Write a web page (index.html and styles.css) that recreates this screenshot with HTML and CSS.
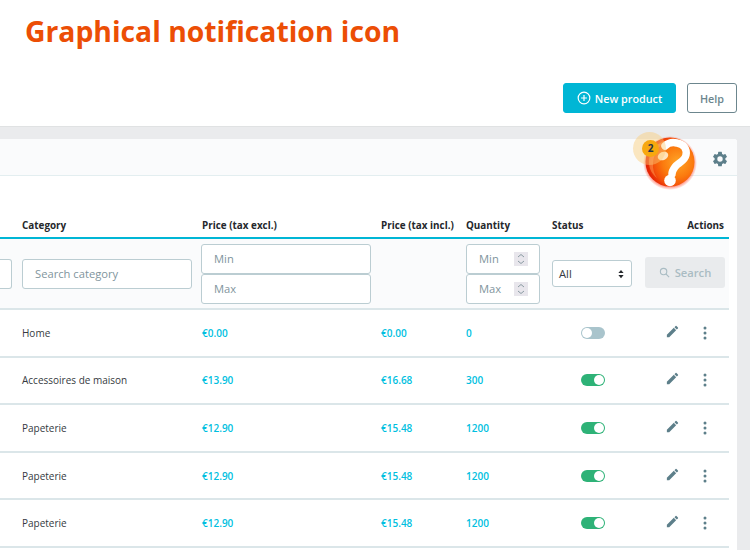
FILE: index.html
```html
<!DOCTYPE html>
<html lang="en">
<head>
<meta charset="utf-8">
<title>Graphical notification icon</title>
<link rel="stylesheet" href="styles.css">
</head>
<body>
<header class="top">
  <h1 class="title">Graphical notification icon</h1>
  <div class="top-actions">
    <button class="btn btn-primary">
      <svg class="plus" viewBox="0 0 24 24" aria-hidden="true"><circle cx="12" cy="12" r="10" fill="none" stroke="#fff" stroke-width="2"/><path d="M12 7v10M7 12h10" stroke="#fff" stroke-width="2" fill="none"/></svg>
      New product
    </button>
    <button class="btn btn-help">Help</button>
  </div>
</header>
<main class="main">
  <section class="card">
    <div class="card-head">
      <div class="notify">
        <svg class="ball" viewBox="0 0 54 54" aria-hidden="true">
          <defs>
            <radialGradient id="ballFill" cx="0.66" cy="0.5" r="0.62">
              <stop offset="0" stop-color="#ffa526"/>
              <stop offset="0.5" stop-color="#fb7a0e"/>
              <stop offset="0.8" stop-color="#f4500a"/>
              <stop offset="1" stop-color="#e42404"/>
            </radialGradient>
            <radialGradient id="ballGlow" cx="0.5" cy="0.5" r="0.5">
              <stop offset="0.85" stop-color="#ff2000" stop-opacity="0.55"/>
              <stop offset="1" stop-color="#ff2000" stop-opacity="0"/>
            </radialGradient>
          </defs>
          <circle cx="27" cy="27" r="27" fill="url(#ballGlow)"/>
          <circle cx="27" cy="26" r="24.5" fill="url(#ballFill)"/>
          <path d="M6 26C6 14 15 5 27 4 17 8 11 15 10 27c-.4 6 1 11 4 15C9 38 6 33 6 26z" fill="#ffa055" opacity="0.5"/>
          <path d="M22 10c3-3 8-4 12-3 7 1 10 6 9 12-1 6-8 8-11 12-1.500 2-3 5-3 7" fill="none" stroke="#fff" stroke-width="7.500" stroke-linecap="round"/>
          <ellipse cx="20" cy="20" rx="5.500" ry="4" transform="rotate(-25 20 20)" fill="#ffe3bd"/>
          <circle cx="27" cy="44.500" r="5.800" fill="#fff"/>
        </svg>
        <span class="halo"></span>
        <span class="badge">2</span>
      </div>
      <svg class="gear" viewBox="0 0 24 24" aria-hidden="true"><path d="M19.14 12.94c.04-.3.06-.61.06-.94s-.02-.64-.07-.94l2.03-1.58a.49.49 0 0 0 .12-.61l-1.92-3.32a.49.49 0 0 0-.59-.22l-2.39.96a7 7 0 0 0-1.62-.94l-.36-2.54a.48.48 0 0 0-.48-.41h-3.84a.48.48 0 0 0-.47.41l-.36 2.54c-.59.24-1.13.57-1.62.94l-2.39-.96a.49.49 0 0 0-.59.22L2.74 8.87a.48.48 0 0 0 .12.61l2.03 1.58c-.05.3-.09.63-.09.94s.02.64.07.94l-2.03 1.58a.49.49 0 0 0-.12.61l1.92 3.32c.12.22.37.29.59.22l2.39-.96c.5.38 1.03.7 1.62.94l.36 2.54c.05.24.24.41.48.41h3.84c.24 0 .44-.17.47-.41l.36-2.54a7 7 0 0 0 1.62-.94l2.39.96c.22.08.47 0 .59-.22l1.92-3.32a.48.48 0 0 0-.12-.61zM12 15.6a3.600 3.600 0 1 1 0-7.200 3.600 3.600 0 0 1 0 7.200z"/></svg>
    </div>
    <div class="table">
      <div class="grid row-head">
        <span></span>
        <span>Category</span>
        <span>Price (tax excl.)</span>
        <span>Price (tax incl.)</span>
        <span>Quantity</span>
        <span>Status</span>
        <span class="end">Actions</span>
      </div>
      <div class="grid row-filter">
        <div class="stub"></div>
        <div class="field field-category">Search category</div>
        <div class="pair pair-price">
          <div class="field">Min</div>
          <div class="field">Max</div>
        </div>
        <span></span>
        <div class="pair pair-qty">
          <div class="field field-qty">Min<svg class="stepper" viewBox="0 0 14 14" aria-hidden="true"><path d="M4 5l3-2.500L10 5M4 9l3 2.500L10 9" fill="none" stroke="#8a9aa2" stroke-width="1"/></svg></div>
          <div class="field field-qty">Max<svg class="stepper" viewBox="0 0 14 14" aria-hidden="true"><path d="M4 5l3-2.500L10 5M4 9l3 2.500L10 9" fill="none" stroke="#8a9aa2" stroke-width="1"/></svg></div>
        </div>
        <div class="select">All<svg class="caret" viewBox="0 0 8 12" aria-hidden="true"><path d="M4 .5l3.500 4.200H.5zM4 11.500L.5 7.300h7z" fill="#25282c"/></svg></div>
        <div class="search-btn"><svg class="search-ic" viewBox="0 0 24 24" aria-hidden="true"><circle cx="10" cy="10" r="7" fill="none" stroke="#a9bcc3" stroke-width="2.400"/><path d="M15 15l7 7" stroke="#a9bcc3" stroke-width="2.600"/></svg>Search</div>
      </div>
      <div class="grid row">
        <span></span><span>Home</span><span class="cy">€0.00</span><span class="cy">€0.00</span><span class="cy">0</span>
        <span class="toggle toggle-off"></span>
        <span class="acts"><svg class="pen" viewBox="0 0 24 24" aria-hidden="true"><path d="M3 17.250V21h3.750L17.810 9.940l-3.750-3.750zM20.710 7.040a1 1 0 0 0 0-1.410l-2.340-2.340a1 1 0 0 0-1.410 0l-1.830 1.830 3.750 3.750z"/></svg><svg class="dots" viewBox="0 0 4 14" aria-hidden="true"><circle cx="2" cy="2" r="1.500"/><circle cx="2" cy="7" r="1.500"/><circle cx="2" cy="12" r="1.500"/></svg></span>
      </div>
      <div class="grid row">
        <span></span><span>Accessoires de maison</span><span class="cy">€13.90</span><span class="cy">€16.68</span><span class="cy">300</span>
        <span class="toggle toggle-on"></span>
        <span class="acts"><svg class="pen" viewBox="0 0 24 24" aria-hidden="true"><path d="M3 17.250V21h3.750L17.810 9.940l-3.750-3.750zM20.710 7.040a1 1 0 0 0 0-1.410l-2.340-2.340a1 1 0 0 0-1.410 0l-1.830 1.830 3.750 3.750z"/></svg><svg class="dots" viewBox="0 0 4 14" aria-hidden="true"><circle cx="2" cy="2" r="1.500"/><circle cx="2" cy="7" r="1.500"/><circle cx="2" cy="12" r="1.500"/></svg></span>
      </div>
      <div class="grid row">
        <span></span><span>Papeterie</span><span class="cy">€12.90</span><span class="cy">€15.48</span><span class="cy">1200</span>
        <span class="toggle toggle-on"></span>
        <span class="acts"><svg class="pen" viewBox="0 0 24 24" aria-hidden="true"><path d="M3 17.250V21h3.750L17.810 9.940l-3.750-3.750zM20.710 7.040a1 1 0 0 0 0-1.410l-2.340-2.340a1 1 0 0 0-1.410 0l-1.830 1.830 3.750 3.750z"/></svg><svg class="dots" viewBox="0 0 4 14" aria-hidden="true"><circle cx="2" cy="2" r="1.500"/><circle cx="2" cy="7" r="1.500"/><circle cx="2" cy="12" r="1.500"/></svg></span>
      </div>
      <div class="grid row">
        <span></span><span>Papeterie</span><span class="cy">€12.90</span><span class="cy">€15.48</span><span class="cy">1200</span>
        <span class="toggle toggle-on"></span>
        <span class="acts"><svg class="pen" viewBox="0 0 24 24" aria-hidden="true"><path d="M3 17.250V21h3.750L17.810 9.940l-3.750-3.750zM20.710 7.040a1 1 0 0 0 0-1.410l-2.340-2.340a1 1 0 0 0-1.410 0l-1.830 1.830 3.750 3.750z"/></svg><svg class="dots" viewBox="0 0 4 14" aria-hidden="true"><circle cx="2" cy="2" r="1.500"/><circle cx="2" cy="7" r="1.500"/><circle cx="2" cy="12" r="1.500"/></svg></span>
      </div>
      <div class="grid row">
        <span></span><span>Papeterie</span><span class="cy">€12.90</span><span class="cy">€15.48</span><span class="cy">1200</span>
        <span class="toggle toggle-on"></span>
        <span class="acts"><svg class="pen" viewBox="0 0 24 24" aria-hidden="true"><path d="M3 17.250V21h3.750L17.810 9.940l-3.750-3.750zM20.710 7.040a1 1 0 0 0 0-1.410l-2.340-2.340a1 1 0 0 0-1.410 0l-1.830 1.830 3.750 3.750z"/></svg><svg class="dots" viewBox="0 0 4 14" aria-hidden="true"><circle cx="2" cy="2" r="1.500"/><circle cx="2" cy="7" r="1.500"/><circle cx="2" cy="12" r="1.500"/></svg></span>
      </div>
    </div>
  </section>
</main>
</body>
</html>
```

FILE: styles.css
```css
* { box-sizing: border-box; }
html, body { height: 100%; }
body {
  margin: 0;
  height: 550px;
  overflow: hidden;
  background: #eaebed;
  font-family: "Open Sans", sans-serif;
  font-size: 10px;
  color: #363a41;
  display: flex;
  flex-direction: column;
}
.top {
  height: 127px;
  flex: none;
  background: #fff;
  border-bottom: 1px solid #e0e2e3;
  padding: 12px 13px 0 25px;
  display: flex;
  flex-direction: column;
}
.title {
  margin: 0;
  font-size: 28.3px;
  line-height: 38px;
  font-weight: 700;
  color: #ec4e05;
}
.top-actions {
  margin-top: 33px;
  display: flex;
  justify-content: flex-end;
  gap: 11px;
}
.btn {
  height: 30px;
  border-radius: 3px;
  font-family: inherit;
  font-size: 10.8px;
  font-weight: 600;
  padding: 0;
  display: flex;
  align-items: center;
  justify-content: center;
}
.btn-primary {
  width: 113px;
  gap: 4px;
  background: #00b6d5;
  border: 1px solid #00b6d5;
  color: #fff;
}
.plus { width: 14px; height: 14px; }
.btn-help {
  width: 50px;
  background: #fff;
  border: 1px solid #6c868e;
  color: #6c868e;
}
.main {
  flex: 1;
  min-height: 0;
  padding: 12px 13px 0 0;
}
.card {
  height: 100%;
  background: #fff;
  border-top-right-radius: 3px;
}
.card-head {
  height: 37px;
  background: #fafbfc;
  border-bottom: 1px solid #e3eef0;
  border-top-right-radius: 3px;
  position: relative;
  display: flex;
  justify-content: flex-end;
  align-items: center;
  padding-right: 8px;
}
.gear { width: 18px; height: 18px; fill: #5d7f8a; margin-top: 4px; }
.notify {
  position: absolute;
  left: 633px;
  top: -3px;
  width: 64px;
  height: 54px;
}
.ball {
  position: absolute;
  left: 10px;
  top: 0;
  width: 54px;
  height: 54px;
}
.halo {
  position: absolute;
  left: 0;
  top: -4px;
  width: 33px;
  height: 33px;
  border-radius: 50%;
  background: rgba(250, 205, 120, 0.45);
}
.badge {
  position: absolute;
  left: 9px;
  top: 4px;
  width: 17px;
  height: 17px;
  border-radius: 50%;
  background: #f7a80f;
  color: #25364a;
  font-size: 10px;
  font-weight: 700;
  line-height: 17px;
  text-align: center;
}
.table { width: 729px; padding-top: 38px; }
.grid {
  display: grid;
  grid-template-columns: 22px 180px 179px 85px 86px 85px 1fr;
  align-items: center;
}
.grid > * { min-width: 0; }
.row-head {
  height: 25px;
  border-bottom: 2px solid #00b6d5;
  font-weight: 700;
  font-size: 9.9px;
  color: #25282c;
  padding-bottom: 1px;
}
.end { text-align: right; padding-right: 5px; }
.row-filter {
  grid-template-columns: 22px 179px 180px 85px 86px 93px 1fr;
  height: 71px;
  background: #fafbfc;
  border-bottom: 2px solid #dbe6e9;
  color: #7f959d;
  font-size: 11.2px;
}
.stub {
  width: 12px;
  height: 30px;
  background: #fff;
  border: 1px solid #bbcdd2;
  border-left: 0;
  border-radius: 0 3px 3px 0;
}
.field {
  height: 30px;
  background: #fff;
  border: 1px solid #bbcdd2;
  border-radius: 3px;
  padding: 0 12px;
  display: flex;
  align-items: center;
  justify-content: space-between;
  color: #7f959d;
}
.field-category { width: 170px; }
.pair { display: flex; flex-direction: column; }
.pair-price { width: 170px; }
.pair-qty { width: 74px; }
.stepper { width: 14px; height: 14px; background: #e8e6ec; flex: none; margin-right: -1px; }
.select {
  width: 80px;
  height: 27px;
  background: #fff;
  border: 1px solid #bbcdd2;
  border-radius: 3px;
  padding: 0 7px 0 6px;
  color: #363a41;
  display: flex;
  align-items: center;
  justify-content: space-between;
}
.caret { width: 6px; height: 10px; }
.search-btn {
  width: 80px;
  height: 31px;
  margin-top: -2px;
  background: #e9ebed;
  border-radius: 3px;
  color: #a9bcc3;
  font-weight: 600;
  display: flex;
  align-items: center;
  justify-content: center;
  gap: 5px;
}
.search-ic { width: 11px; height: 11px; }
.row {
  height: 47.6px;
  border-bottom: 2px solid #dbe6e9;
}
.cy { color: #00bfdf; font-weight: 600; }
.toggle {
  position: relative;
  width: 24px;
  height: 12px;
  margin-left: 29px;
  border-radius: 6px;
}
.toggle::after {
  content: "";
  position: absolute;
  top: 1px;
  width: 10px;
  height: 10px;
  border-radius: 50%;
  background: #fff;
}
.toggle-off { background: #a9c4cc; }
.toggle-off::after { left: 1px; }
.toggle-on { background: #2eb277; }
.toggle-on::after { right: 1px; }
.acts {
  display: flex;
  justify-content: flex-end;
  align-items: center;
  gap: 23px;
  padding-right: 22px;
}
.pen { width: 15px; height: 15px; fill: #5d7f8a; margin-top: -3px; }
.dots { width: 4px; height: 14px; fill: #5d7f8a; }
```
